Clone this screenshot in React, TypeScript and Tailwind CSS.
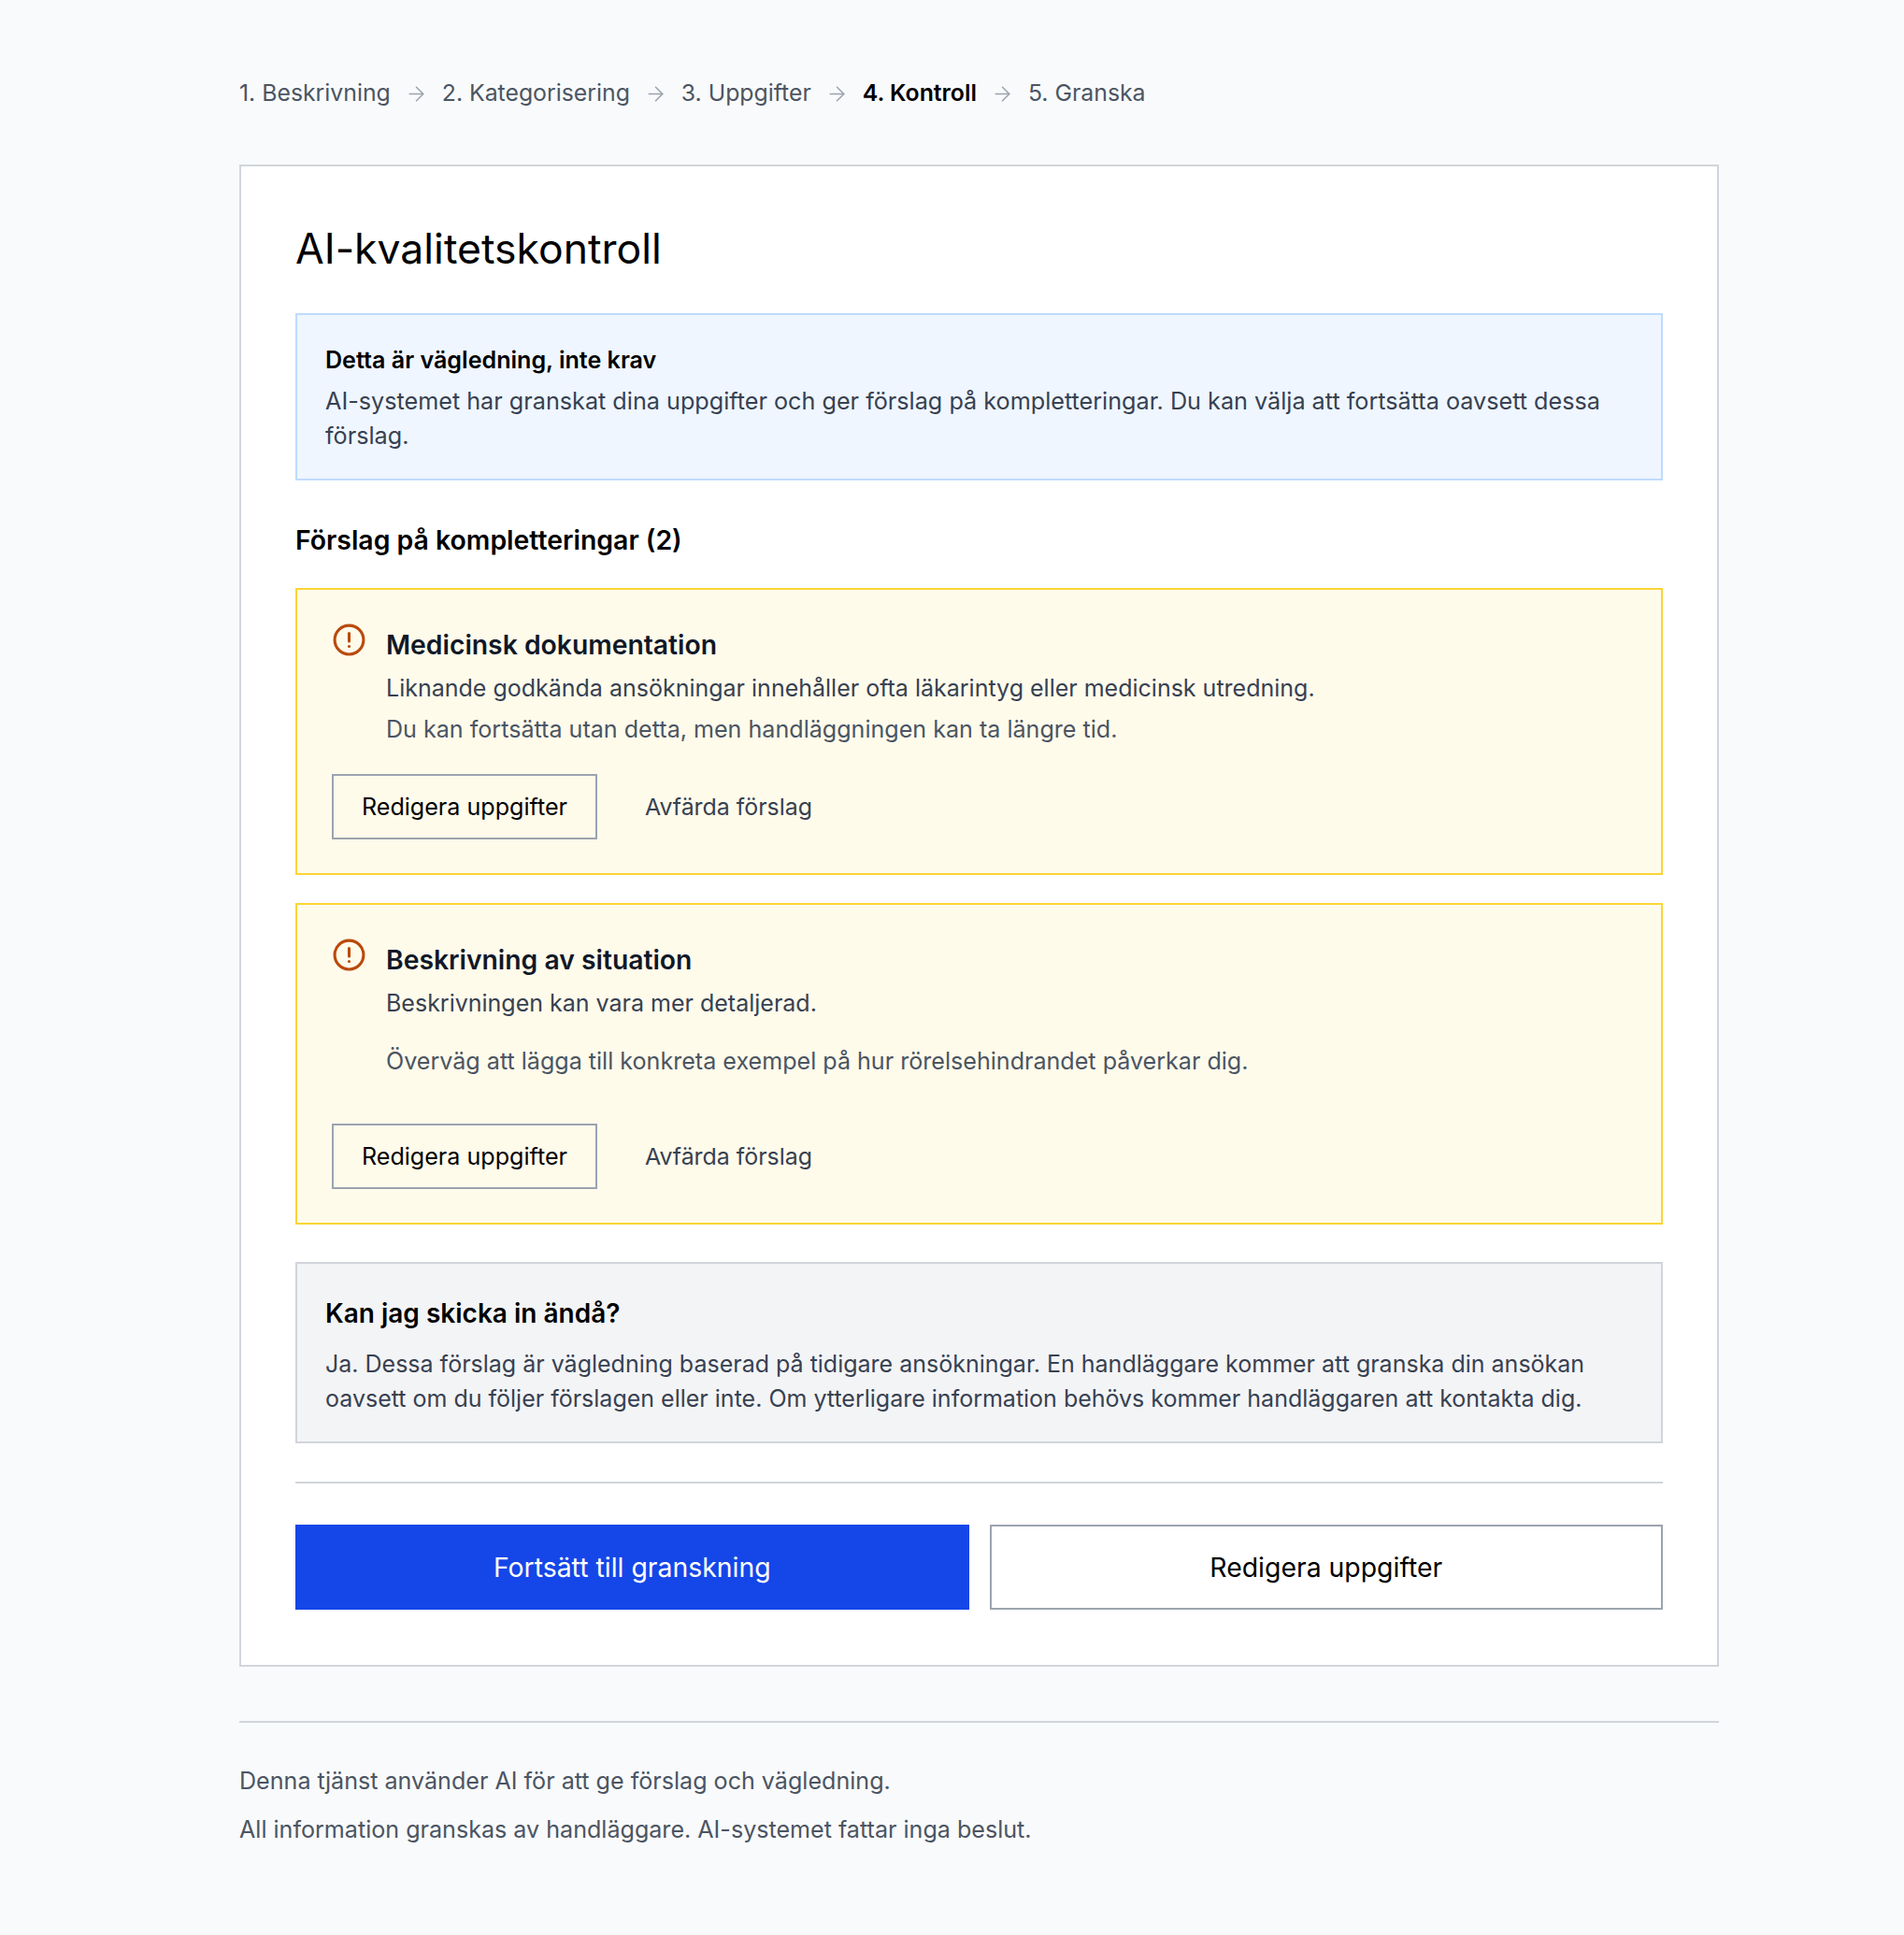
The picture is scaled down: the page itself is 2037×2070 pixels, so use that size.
import { ArrowRight } from 'lucide-react';

const steps = ['1. Beskrivning', '2. Kategorisering', '3. Uppgifter', '4. Kontroll', '5. Granska'];

function AlertIcon() {
  return (
    <svg viewBox="0 0 24 24" fill="none" stroke="#b94a0c" strokeWidth={2} strokeLinecap="round" className="w-[37px] h-[37px] mr-[1px] shrink-0">
      <circle cx="12" cy="12" r="10" />
      <path d="M12 7.5v5.5" />
      <path d="M12 16.5h.01" />
    </svg>
  );
}

function Suggestion({ title, lines, gap }: { title: string; lines: string[]; gap: string }) {
  return (
    <div className="border-2 border-[#fcd535] bg-[#fffbeb] px-[37px] pt-[35px] pb-[36px]">
      <div className="flex gap-[20px]">
        <AlertIcon />
        <div>
          <h3 className="text-[28.3px] leading-[48px] font-semibold text-[#111827]">{title}</h3>
          <div className={gap}>
            {lines.map((line, i) => (
              <p key={line} className={i === 0 ? 'text-[25px] leading-[44px] text-[#374151]' : 'text-[25.1px] leading-[44px] text-[#4b5563]'}>{line}</p>
            ))}
          </div>
        </div>
      </div>
      <div className="mt-[26px] flex items-center gap-[51px]">
        <button className="h-[70px] pt-[2px] px-[30px] border-2 border-[#9ca3af] text-[25.1px] text-black">Redigera uppgifter</button>
        <button className="pt-[2px] text-[24.9px] text-[#374151]">Avfärda förslag</button>
      </div>
    </div>
  );
}

export default function App() {
  return (
    <div className="min-h-[2070px] bg-[#f9fafb] pl-[256px] pr-[198px] pt-[78px] font-['Inter',sans-serif]">
      <nav className="flex items-center h-[42px] pt-[2px] text-[24.8px] text-[#4b5563]">
        {steps.map((step, i) => (
          <div key={step} className="flex items-center">
            {i > 0 && <ArrowRight className="w-[25px] h-[25px] mx-[15px] text-[#9ca3af]" strokeWidth={1.5} />}
            <span className={step.startsWith('4') ? 'font-semibold text-black' : ''}>{step}</span>
          </div>
        ))}
      </nav>

      <main className="mt-[56px] border-2 border-[#d1d5db] bg-white px-[58px] pt-[58px] pb-[59px]">
        <h1 className="text-[44.5px] leading-[60px] text-black">AI-kvalitetskontroll</h1>

        <div className="mt-[39px] border-2 border-[#bfdbfe] bg-[#eff6ff] px-[30px] pt-[28px] pb-[27px]">
          <h2 className="text-[25.1px] leading-[40px] font-semibold text-black">Detta är vägledning, inte krav</h2>
          <p className="mt-[6px] text-[25.2px] leading-[37px] text-[#374151]">
            AI-systemet har granskat dina uppgifter och ger förslag på kompletteringar. Du kan välja att fortsätta oavsett dessa förslag.
          </p>
        </div>

        <h2 className="mt-[42px] text-[28.4px] leading-[44px] font-semibold text-black">Förslag på kompletteringar (2)</h2>

        <div className="mt-[29px] flex flex-col gap-[30px]">
          <Suggestion
            title="Medicinsk dokumentation"
            lines={[
              'Liknande godkända ansökningar innehåller ofta läkarintyg eller medicinsk utredning.',
              'Du kan fortsätta utan detta, men handläggningen kan ta längre tid.',
            ]}
            gap=""
          />
          <Suggestion
            title="Beskrivning av situation"
            lines={[
              'Beskrivningen kan vara mer detaljerad.',
              'Överväg att lägga till konkreta exempel på hur rörelsehindrandet påverkar dig.',
            ]}
            gap="flex flex-col gap-[18px] pb-[19px]"
          />
        </div>

        <div className="mt-[40px] border-2 border-[#d1d5db] bg-[#f3f4f6] px-[30px] pt-[30px] pb-[27px]">
          <h2 className="text-[28px] leading-[46px] font-semibold text-black">Kan jag skicka in ändå?</h2>
          <p className="mt-[13px] text-[25px] leading-[37px] text-[#374151]">
            Ja. Dessa förslag är vägledning baserad på tidigare ansökningar. En handläggare kommer att granska din ansökan oavsett om du följer förslagen eller inte. Om ytterligare information behövs kommer handläggaren att kontakta dig.
          </p>
        </div>

        <div className="mt-[41px] border-t-2 border-[#d1d5db] pt-[44px] grid grid-cols-2 gap-[22px]">
          <button className="h-[91px] pt-[2px] bg-[#1546e8] text-white text-[28.4px]">Fortsätt till granskning</button>
          <button className="h-[91px] pt-[2px] border-2 border-[#9ca3af] bg-white text-black text-[28.4px]">Redigera uppgifter</button>
        </div>
      </main>

      <footer className="mt-[58px] border-t-2 border-[#d1d5db] pt-[42px] text-[25.1px] text-[#4b5563]">
        <p className="leading-[40px]">Denna tjänst använder AI för att ge förslag och vägledning.</p>
        <p className="mt-[12px] leading-[40px]">All information granskas av handläggare. AI-systemet fattar inga beslut.</p>
      </footer>
    </div>
  );
}
